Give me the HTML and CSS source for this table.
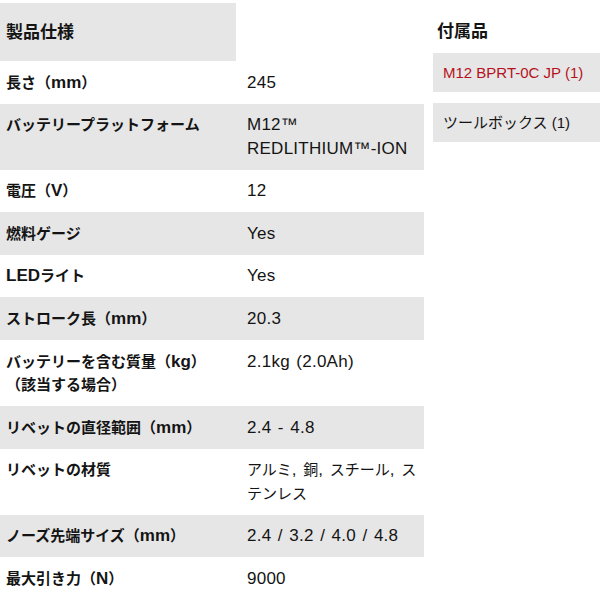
FILE: index.html
```html
<!DOCTYPE html>
<html lang="ja">
<head>
<meta charset="utf-8">
<link rel="stylesheet" href="styles.css">
</head>
<body>
<div class="page">
  <section class="specs">
    <h2 class="specs-title">製品仕様</h2>
    <div class="spec-table">
      <div class="row"><div class="label">長さ（<span class="lat">mm</span>）</div><div class="value">245</div></div>
      <div class="row alt"><div class="label">バッテリープラットフォーム</div><div class="value">M12™<br>REDLITHIUM™-ION</div></div>
      <div class="row"><div class="label">電圧（<span class="lat">V</span>）</div><div class="value">12</div></div>
      <div class="row alt"><div class="label">燃料ゲージ</div><div class="value">Yes</div></div>
      <div class="row"><div class="label"><span class="lat">LED</span>ライト</div><div class="value">Yes</div></div>
      <div class="row alt"><div class="label">ストローク長（<span class="lat">mm</span>）</div><div class="value">20.3</div></div>
      <div class="row"><div class="label">バッテリーを含む質量（<span class="lat">kg</span>）<br>（該当する場合）</div><div class="value">2.1kg (2.0Ah)</div></div>
      <div class="row alt"><div class="label">リベットの直径範囲（<span class="lat">mm</span>）</div><div class="value">2.4 - 4.8</div></div>
      <div class="row"><div class="label">リベットの材質</div><div class="value"><span class="jp">アルミ</span>, <span class="jp">銅</span>, <span class="jp">スチール</span>, <span class="jp">ス</span><br><span class="jp">テンレス</span></div></div>
      <div class="row alt"><div class="label">ノーズ先端サイズ（<span class="lat">mm</span>）</div><div class="value">2.4 / 3.2 / 4.0 / 4.8</div></div>
      <div class="row"><div class="label">最大引き力（<span class="lat">N</span>）</div><div class="value">9000</div></div>
    </div>
  </section>
  <aside class="accessories">
    <h2 class="acc-title">付属品</h2>
    <ul class="acc-list">
      <li class="acc-item acc-link">M12 BPRT-0C JP (1)</li>
      <li class="acc-item">ツールボックス (1)</li>
    </ul>
  </aside>
</div>
</body>
</html>
```
FILE: styles.css
```css
html, body {
  margin: 0;
  padding: 0;
  background: #ffffff;
}
body {
  font-family: "Liberation Sans", "Noto Sans CJK JP", sans-serif;
  color: #141414;
}
.page {
  display: flex;
  align-items: flex-start;
  width: 600px;
}
.specs {
  width: 424px;
  flex: none;
}
.specs-title {
  margin: 3px 0 0 0;
  width: 236px;
  height: 58px;
  box-sizing: border-box;
  padding: 1px 0 0 6px;
  background: #e6e6e6;
  font-size: 17px;
  font-weight: 700;
  line-height: 58px;
}
.spec-table {
  display: flex;
  flex-direction: column;
}
.row {
  display: grid;
  grid-template-columns: 237px 1fr;
  padding: 9.6px 0;
  line-height: 23.4px;
}
.row.alt {
  background: #e6e6e6;
}
.label {
  padding-left: 6px;
  font-size: 15px;
  font-weight: 700;
}
.lat {
  font-size: 17px;
}
.value {
  padding-left: 10px;
  font-size: 17px;
  letter-spacing: 0.25px;
  word-spacing: 1.5px;
}
.jp {
  font-size: 15px;
  letter-spacing: 0;
}
.accessories {
  flex: 1;
  margin-left: 9px;
}
.acc-title {
  margin: 0;
  padding: 21px 0 0 4px;
  height: 32px;
  font-size: 17px;
  font-weight: 700;
  line-height: 22px;
}
.acc-list {
  list-style: none;
  margin: 0;
  padding: 0;
  display: flex;
  flex-direction: column;
  gap: 11px;
}
.acc-item {
  background: #e6e6e6;
  height: 39px;
  line-height: 39px;
  padding-left: 10px;
  font-size: 15px;
}
.acc-link {
  color: #b5121b;
}
```
